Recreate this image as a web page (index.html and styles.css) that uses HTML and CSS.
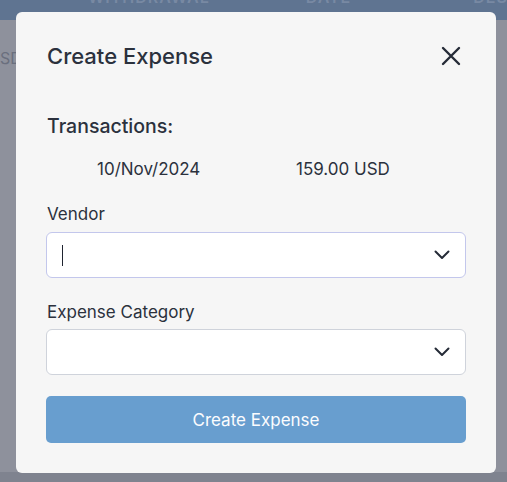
FILE: index.html
```html
<!DOCTYPE html>
<html>
<head>
<meta charset="utf-8">
<link rel="stylesheet" href="styles.css">
</head>
<body>
<div class="page">
  <div class="table-head">
    <span class="th th-name">WITHDRAWAL</span>
    <span class="th th-date">DATE</span>
    <span class="th th-desc">DESC</span>
  </div>
  <div class="page-body">
    <div class="cell-left">USD</div>
  </div>
  <div class="page-foot"></div>
</div>
<div class="modal">
  <div class="modal-head">
    <h2 class="modal-title">Create Expense</h2>
    <button class="close" aria-label="Close">
      <svg width="20" height="20" viewBox="0 0 20 20"><path d="M2 2 L18 18 M18 2 L2 18" stroke="#252b37" stroke-width="2.4" stroke-linecap="round" fill="none"/></svg>
    </button>
  </div>
  <div class="section-title">Transactions:</div>
  <div class="tx-row">
    <span class="tx-date">10/Nov/2024</span>
    <span class="tx-amount">159.00 USD</span>
  </div>
  <label class="field-label first">Vendor</label>
  <div class="select focused">
    <span class="caret"></span>
    <svg class="chev" width="16" height="10" viewBox="0 0 16 10"><path d="M1.5 1.5 L8 8 L14.5 1.5" stroke="#252b37" stroke-width="2" stroke-linecap="round" stroke-linejoin="round" fill="none"/></svg>
  </div>
  <label class="field-label second">Expense Category</label>
  <div class="select second-select">
    <svg class="chev" width="16" height="10" viewBox="0 0 16 10"><path d="M1.5 1.5 L8 8 L14.5 1.5" stroke="#252b37" stroke-width="2" stroke-linecap="round" stroke-linejoin="round" fill="none"/></svg>
  </div>
  <button class="submit">Create Expense</button>
</div>
</body>
</html>
```
FILE: styles.css
```css
* { box-sizing: border-box; }
html, body { margin: 0; padding: 0; }
body {
  width: 507px;
  height: 482px;
  overflow: hidden;
  background: #8e919c;
  font-family: Inter, "Noto Sans", sans-serif;
  position: relative;
}
.page { display: flex; flex-direction: column; height: 482px; }
.table-head {
  height: 20px;
  background: #5f7491;
  display: flex;
  align-items: flex-start;
  font-size: 16px;
  line-height: 16px;
  color: #7889a3;
  letter-spacing: 1px;
  font-weight: 600;
  overflow: hidden;
}
.th { display: block; margin-top: -11px; }
.th-name { margin-left: 88px; }
.th-date { margin-left: 96px; }
.th-desc { margin-left: 122px; }
.page-body { flex: 1; padding-top: 28px; }
.cell-left { margin-left: -12px; font-size: 16px; color: #6a6f7e; }
.page-foot { height: 10px; background: #7f838f; }

.modal {
  position: absolute;
  left: 16px;
  top: 12px;
  width: 480px;
  height: 461px;
  background: #f6f6f6;
  border-radius: 6px;
  padding: 30px 30px;
  color: #2b313d;
}
.modal-head {
  display: flex;
  justify-content: space-between;
  align-items: center;
  height: 28px;
}
.modal-title {
  margin: 0;
  font-size: 22px;
  font-weight: 500;
  line-height: 28px;
  margin-left: 1px;
}
.close {
  border: 0;
  background: none;
  padding: 0;
  width: 20px;
  height: 20px;
  margin-right: 5px;
  display: flex;
}
.section-title {
  margin-top: 44px;
  font-size: 19.5px;
  line-height: 24px;
  font-weight: 500;
  margin-left: 1px;
}
.tx-row {
  display: flex;
  margin-top: 20px;
  font-size: 17px;
  line-height: 22px;
  padding-left: 51px;
}
.tx-date { width: 199px; }
.field-label {
  display: block;
  font-size: 17px;
  line-height: 22px;
  margin-left: 1px;
  font-weight: 400;
}
.field-label.first { margin-top: 23px; }
.field-label.second { margin-top: 23px; }
.select {
  margin-top: 7px;
  height: 46px;
  background: #fff;
  border: 1px solid #cfd3db;
  border-radius: 6px;
  display: flex;
  align-items: center;
  padding: 0 15px;
  position: relative;
}
.select.second-select { margin-top: 6px; }
.select.focused { border-color: #c3c7ec; }
.caret {
  width: 1px;
  height: 21px;
  background: #1f2430;
}
.chev { margin-left: auto; }
.submit {
  display: block;
  width: 100%;
  margin-top: 21px;
  height: 47px;
  border: 0;
  border-radius: 5px;
  background: #689ecf;
  color: #fbfcfe;
  font-family: Inter, "Noto Sans", sans-serif;
  font-size: 17px;
  font-weight: 400;
}
```
